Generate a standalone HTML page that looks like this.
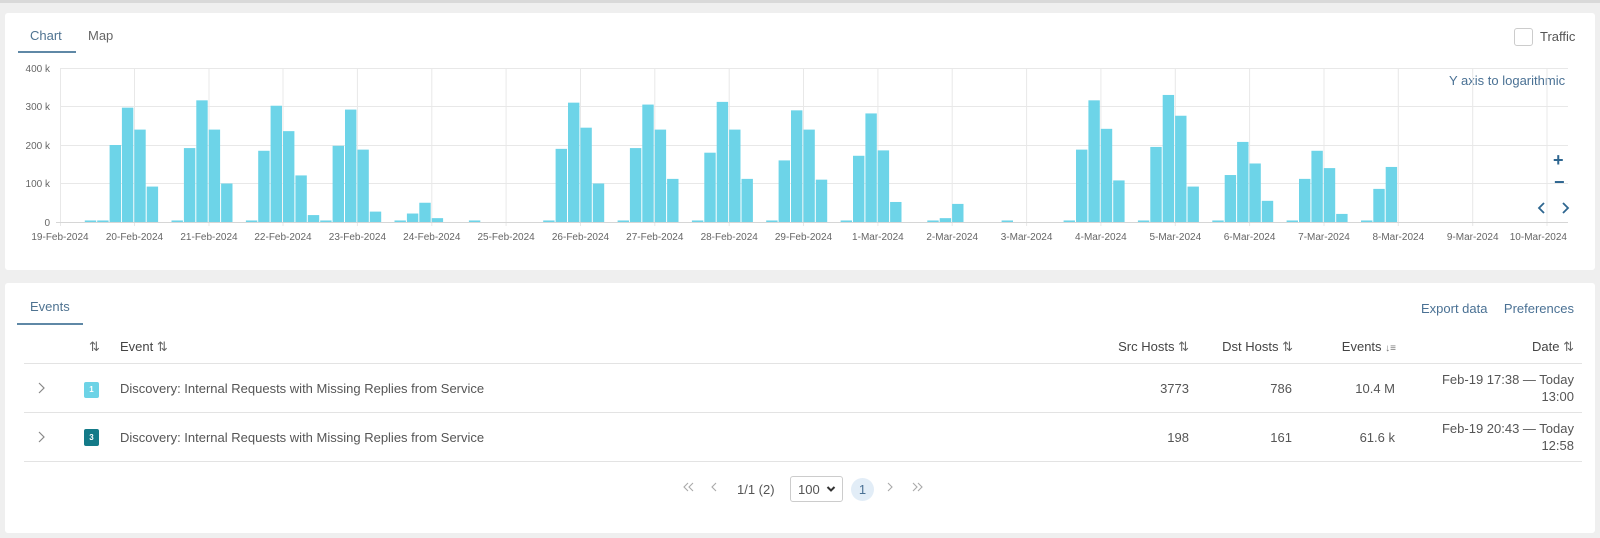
<!DOCTYPE html>
<html><head><meta charset="utf-8"><style>
*{box-sizing:border-box;margin:0;padding:0}
body{width:1600px;height:538px;background:#efefef;font-family:"Liberation Sans",sans-serif;color:#555;position:relative;overflow:hidden}
.card{position:absolute;background:#fff;left:5px;right:5px;border-radius:3px}
.a{position:absolute;white-space:nowrap}
.lnk{color:#4a7194}
.r{text-align:right}
.fs{font-size:13px}
</style></head><body>
<div style="position:absolute;left:0;right:0;top:0;height:3px;background:#d9d9d9"></div>
<div class="card" style="top:13px;height:257px"></div>
<div class="card" style="top:283px;height:250px"></div>

<!-- chart tabs -->
<div class="a" style="left:30px;top:28px;font-size:13px;color:#4f7391">Chart</div>
<div class="a" style="left:88px;top:28px;font-size:13px;color:#666">Map</div>
<div class="a" style="left:18px;top:51px;width:58px;height:2px;background:#5f88a6"></div>
<div class="a" style="left:1514px;top:28px;width:19px;height:18px;border:1px solid #ccc;border-radius:3px"></div>
<div class="a" style="left:1540px;top:29px;font-size:13px;color:#555">Traffic</div>
<div class="a lnk" style="left:1449px;top:73px;font-size:13px">Y axis to logarithmic</div>
<div class="a" style="left:1553px;top:150px;font-size:18px;color:#2e6690;font-weight:bold">+</div>
<div class="a" style="left:1554px;top:172px;font-size:18px;color:#2e6690;font-weight:bold">−</div>
<svg class="a" style="left:1534px;top:200px" width="40" height="16"><path d="M10 3 L5 8 L10 13 M29 3 L34 8 L29 13" stroke="#2e6690" stroke-width="1.8" fill="none"/></svg>

<svg class="a" style="left:0;top:0" width="1600" height="250">
<g stroke="#e8e8e8" stroke-width="1">
<line x1="60" x2="1568" y1="68.5" y2="68.5"/><line x1="60" x2="1568" y1="106.5" y2="106.5"/><line x1="60" x2="1568" y1="145.5" y2="145.5"/><line x1="60" x2="1568" y1="183.5" y2="183.5"/>
</g>
<g stroke="#e8e8e8">
<line x1="60.5" x2="60.5" y1="68" y2="226"/><line x1="134.5" x2="134.5" y1="68" y2="226"/><line x1="209" x2="209" y1="68" y2="226"/><line x1="283" x2="283" y1="68" y2="226"/><line x1="357.4" x2="357.4" y1="68" y2="226"/><line x1="431.8" x2="431.8" y1="68" y2="226"/><line x1="506.1" x2="506.1" y1="68" y2="226"/><line x1="580.5" x2="580.5" y1="68" y2="226"/><line x1="654.8" x2="654.8" y1="68" y2="226"/><line x1="729.2" x2="729.2" y1="68" y2="226"/><line x1="803.5" x2="803.5" y1="68" y2="226"/><line x1="877.9" x2="877.9" y1="68" y2="226"/><line x1="952.2" x2="952.2" y1="68" y2="226"/><line x1="1026.6" x2="1026.6" y1="68" y2="226"/><line x1="1100.9" x2="1100.9" y1="68" y2="226"/><line x1="1175.3" x2="1175.3" y1="68" y2="226"/><line x1="1249.6" x2="1249.6" y1="68" y2="226"/><line x1="1324" x2="1324" y1="68" y2="226"/><line x1="1398.3" x2="1398.3" y1="68" y2="226"/><line x1="1472.7" x2="1472.7" y1="68" y2="226"/><line x1="1547" x2="1547" y1="68" y2="226"/>
</g>
<line x1="56" x2="1568" y1="222.5" y2="222.5" stroke="#d6d6d6"/>
<g font-size="10" fill="#666" text-anchor="end" font-family="Liberation Sans,sans-serif">
<text x="50" y="72">400 k</text><text x="50" y="110">300 k</text><text x="50" y="149">200 k</text><text x="50" y="187">100 k</text><text x="50" y="226">0</text>
</g>
<g font-size="10" fill="#666" text-anchor="middle" font-family="Liberation Sans,sans-serif">
<text x="60" y="240">19-Feb-2024</text><text x="134.5" y="240">20-Feb-2024</text><text x="209" y="240">21-Feb-2024</text><text x="283" y="240">22-Feb-2024</text><text x="357.4" y="240">23-Feb-2024</text><text x="431.8" y="240">24-Feb-2024</text><text x="506.1" y="240">25-Feb-2024</text><text x="580.5" y="240">26-Feb-2024</text><text x="654.8" y="240">27-Feb-2024</text><text x="729.2" y="240">28-Feb-2024</text><text x="803.5" y="240">29-Feb-2024</text><text x="877.9" y="240">1-Mar-2024</text><text x="952.2" y="240">2-Mar-2024</text><text x="1026.6" y="240">3-Mar-2024</text><text x="1100.9" y="240">4-Mar-2024</text><text x="1175.3" y="240">5-Mar-2024</text><text x="1249.6" y="240">6-Mar-2024</text><text x="1324" y="240">7-Mar-2024</text><text x="1398.3" y="240">8-Mar-2024</text><text x="1472.7" y="240">9-Mar-2024</text><text x="1567" y="240" text-anchor="end">10-Mar-2024</text>
</g>
<g transform="translate(0,222) scale(1,-0.385)" fill="#6dd4e8">
<rect x="84.8" width="11.4" height="4"/><rect x="97.2" width="11.4" height="4"/><rect x="109.6" width="11.4" height="200"/><rect x="121.9" width="11.4" height="297"/><rect x="134.3" width="11.4" height="240"/><rect x="146.7" width="11.4" height="92"/>
<rect x="171.5" width="11.4" height="4"/><rect x="183.9" width="11.4" height="192"/><rect x="196.3" width="11.4" height="316"/><rect x="208.7" width="11.4" height="240"/><rect x="221.1" width="11.4" height="100"/>
<rect x="245.9" width="11.4" height="4"/><rect x="258.2" width="11.4" height="185"/><rect x="270.6" width="11.4" height="302"/><rect x="283" width="11.4" height="236"/><rect x="295.4" width="11.4" height="121"/><rect x="307.8" width="11.4" height="18"/><rect x="320.2" width="11.4" height="4"/>
<rect x="332.6" width="11.4" height="198"/><rect x="345" width="11.4" height="292"/><rect x="357.4" width="11.4" height="188"/><rect x="369.8" width="11.4" height="27"/>
<rect x="394.5" width="11.4" height="4"/><rect x="406.9" width="11.4" height="22"/><rect x="419.3" width="11.4" height="50"/><rect x="431.7" width="11.4" height="10"/>
<rect x="468.9" width="11.4" height="4"/>
<rect x="543.2" width="11.4" height="4"/><rect x="555.6" width="11.4" height="190"/><rect x="568" width="11.4" height="310"/><rect x="580.4" width="11.4" height="245"/><rect x="592.8" width="11.4" height="100"/>
<rect x="617.6" width="11.4" height="4"/><rect x="629.9" width="11.4" height="192"/><rect x="642.3" width="11.4" height="305"/><rect x="654.7" width="11.4" height="240"/><rect x="667.1" width="11.4" height="112"/>
<rect x="691.9" width="11.4" height="4"/><rect x="704.3" width="11.4" height="180"/><rect x="716.7" width="11.4" height="312"/><rect x="729.1" width="11.4" height="240"/><rect x="741.5" width="11.4" height="112"/>
<rect x="766.2" width="11.4" height="4"/><rect x="778.6" width="11.4" height="160"/><rect x="791" width="11.4" height="290"/><rect x="803.4" width="11.4" height="240"/><rect x="815.8" width="11.4" height="110"/>
<rect x="840.6" width="11.4" height="4"/><rect x="853" width="11.4" height="172"/><rect x="865.4" width="11.4" height="282"/><rect x="877.7" width="11.4" height="186"/><rect x="890.1" width="11.4" height="52"/>
<rect x="927.3" width="11.4" height="4"/><rect x="939.7" width="11.4" height="10"/><rect x="952.1" width="11.4" height="47"/>
<rect x="1001.6" width="11.4" height="4"/>
<rect x="1063.6" width="11.4" height="4"/><rect x="1076" width="11.4" height="188"/><rect x="1088.4" width="11.4" height="316"/><rect x="1100.8" width="11.4" height="242"/><rect x="1113.2" width="11.4" height="108"/>
<rect x="1137.9" width="11.4" height="4"/><rect x="1150.3" width="11.4" height="195"/><rect x="1162.7" width="11.4" height="330"/><rect x="1175.1" width="11.4" height="276"/><rect x="1187.5" width="11.4" height="92"/>
<rect x="1212.3" width="11.4" height="4"/><rect x="1224.7" width="11.4" height="122"/><rect x="1237.1" width="11.4" height="208"/><rect x="1249.4" width="11.4" height="152"/><rect x="1261.8" width="11.4" height="55"/>
<rect x="1286.6" width="11.4" height="4"/><rect x="1299" width="11.4" height="112"/><rect x="1311.4" width="11.4" height="185"/><rect x="1323.8" width="11.4" height="140"/><rect x="1336.2" width="11.4" height="21"/>
<rect x="1361" width="11.4" height="4"/><rect x="1373.3" width="11.4" height="86"/><rect x="1385.7" width="11.4" height="143"/>
</g>
</svg>

<!-- events card -->
<div class="a" style="left:30px;top:299px;font-size:13px;color:#4f7391">Events</div>
<div class="a" style="left:17px;top:323px;width:66px;height:2px;background:#5f88a6"></div>
<div class="a lnk fs" style="left:1421px;top:301px">Export data</div>
<div class="a lnk fs r" style="right:26px;top:301px">Preferences</div>

<div class="a fs" style="left:89px;top:339px;color:#666">⇅</div>
<div class="a fs" style="left:120px;top:339px;color:#444">Event <span style="color:#666">⇅</span></div>
<div class="a fs r" style="right:411px;top:339px;color:#444">Src Hosts <span style="color:#666">⇅</span></div>
<div class="a fs r" style="right:307px;top:339px;color:#444">Dst Hosts <span style="color:#666">⇅</span></div>
<div class="a fs r" style="right:204px;top:339px;color:#444">Events <span style="color:#777;font-size:10px">↓≡</span></div>
<div class="a fs r" style="right:26px;top:339px;color:#444">Date <span style="color:#666">⇅</span></div>
<div class="a" style="left:24px;width:1558px;top:363px;height:1px;background:#e3e3e3"></div>
<div class="a" style="left:24px;width:1558px;top:412px;height:1px;background:#e3e3e3"></div>
<div class="a" style="left:24px;width:1558px;top:461px;height:1px;background:#e3e3e3"></div>

<svg class="a" style="left:36px;top:381px" width="12" height="14"><path d="M3 2 L8 7 L3 12" stroke="#888" stroke-width="1.2" fill="none"/></svg>
<svg class="a" style="left:36px;top:430px" width="12" height="14"><path d="M3 2 L8 7 L3 12" stroke="#888" stroke-width="1.2" fill="none"/></svg>
<div class="a" style="left:84px;top:382px;width:15px;height:16px;background:#6dd3e6;border-radius:2px;color:#fff;font-size:8px;text-align:center;line-height:16px;font-weight:bold">1</div>
<div class="a" style="left:84px;top:429px;width:15px;height:17px;background:#137a88;border-radius:2px;color:#fff;font-size:8px;text-align:center;line-height:17px;font-weight:bold">3</div>
<div class="a fs" style="left:120px;top:381px">Discovery: Internal Requests with Missing Replies from Service</div>
<div class="a fs" style="left:120px;top:430px">Discovery: Internal Requests with Missing Replies from Service</div>
<div class="a fs r" style="right:411px;top:381px">3773</div>
<div class="a fs r" style="right:308px;top:381px">786</div>
<div class="a fs r" style="right:205px;top:381px">10.4 M</div>
<div class="a fs r" style="right:26px;top:371px;line-height:17px">Feb-19 17:38 — Today<br>13:00</div>
<div class="a fs r" style="right:411px;top:430px">198</div>
<div class="a fs r" style="right:308px;top:430px">161</div>
<div class="a fs r" style="right:205px;top:430px">61.6 k</div>
<div class="a fs r" style="right:26px;top:420px;line-height:17px">Feb-19 20:43 — Today<br>12:58</div>

<!-- pagination -->
<svg class="a" style="left:681px;top:481px" width="16" height="12"><path d="M7 2 L3 6 L7 10 M12 2 L8 6 L12 10" stroke="#aaa" stroke-width="1.1" fill="none"/></svg>
<svg class="a" style="left:709px;top:481px" width="10" height="12"><path d="M7 2 L3 6 L7 10" stroke="#aaa" stroke-width="1.1" fill="none"/></svg>
<div class="a fs" style="left:737px;top:482px">1/1 (2)</div>
<div class="a" style="left:790px;top:476px;width:53px;height:26px;border:1px solid #ccc;border-radius:3px"></div>
<div class="a fs" style="left:798px;top:482px">100</div>
<svg class="a" style="left:826px;top:485px" width="10" height="8"><path d="M1.5 2 L5 5.5 L8.5 2" stroke="#333" stroke-width="2" fill="none"/></svg>
<div class="a" style="left:851px;top:478px;width:23px;height:23px;border-radius:50%;background:#e2edf7;color:#4a7194;font-size:13px;text-align:center;line-height:23px">1</div>
<svg class="a" style="left:885px;top:481px" width="10" height="12"><path d="M3 2 L7 6 L3 10" stroke="#aaa" stroke-width="1.1" fill="none"/></svg>
<svg class="a" style="left:909px;top:481px" width="16" height="12"><path d="M4 2 L8 6 L4 10 M9 2 L13 6 L9 10" stroke="#aaa" stroke-width="1.1" fill="none"/></svg>
</body></html>
